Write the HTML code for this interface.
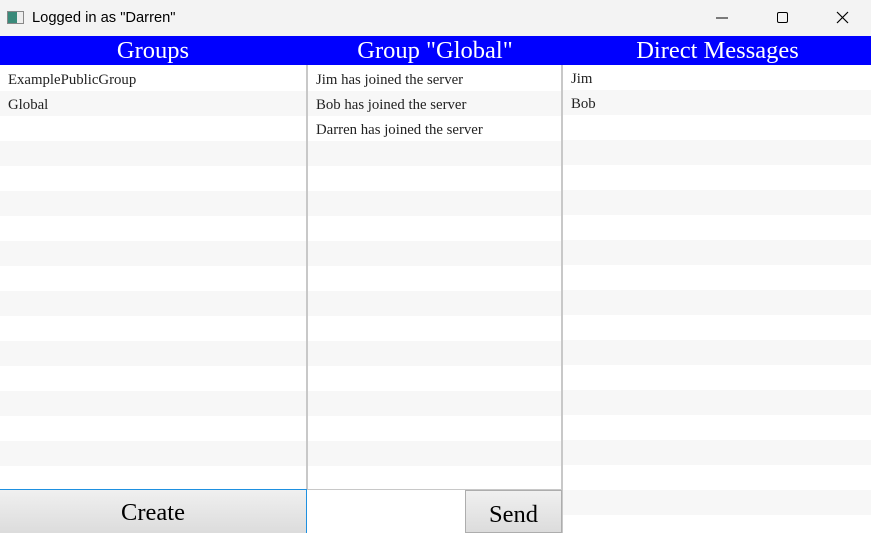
<!DOCTYPE html>
<html><head><meta charset="utf-8"><style>
*{margin:0;padding:0;box-sizing:border-box}
body{width:871px;height:533px;overflow:hidden;background:#fff;position:relative;font-family:"Liberation Serif",serif}
.title{position:absolute;left:0;top:0;width:871px;height:36px;background:#f3f3f3;font-family:"Liberation Sans",sans-serif;font-size:14.7px;color:#000}
.title .t{position:absolute;left:32px;top:10px}
.icon{position:absolute;left:7px;top:11px;width:17px;height:13px;border:1px solid #888;background:linear-gradient(90deg,#3a8a7a 0 60%,#eee 60%)}
.hdr{position:absolute;top:36px;height:29px;background:#0000ff;color:#fff;font-size:24.5px;text-align:center;line-height:29px}
.list{position:absolute;overflow:hidden;background:repeating-linear-gradient(#fff 0 25px,#f7f7f7 25px 50px)}
.row{height:25px;line-height:28px;font-size:14.8px;color:#222;padding-left:8px}
.vb{position:absolute;width:2px;background:#c8c8c8}
.btn{position:absolute;background:linear-gradient(#f0f0f0,#dcdcdc);border:1px solid #adadad;font-size:24.5px;text-align:center;color:#000}
</style></head><body>
<div class="title"><div class="icon"></div><span class="t">Logged in as "Darren"</span>
<svg style="position:absolute;left:716px;top:11px" width="140" height="14"><line x1="0" y1="7" x2="12" y2="7" stroke="#000" stroke-width="1"/><rect x="61.5" y="1.5" width="10" height="10" rx="1.5" fill="none" stroke="#000"/><path d="M121 1L132 12M132 1L121 12" stroke="#000" stroke-width="1.2"/></svg></div>
<div class="hdr" style="left:0;width:306px">Groups</div>
<div class="hdr" style="left:306px;width:258px">Group "Global"</div>
<div class="hdr" style="left:564px;width:307px;">Direct Messages</div>
<div class="list" style="left:0;top:66px;width:306px;height:423px"><div class="row">ExamplePublicGroup</div><div class="row">Global</div></div>
<div class="vb" style="left:306px;top:65px;height:425px"></div>
<div class="list" style="left:308px;top:66px;width:253px;height:424px"><div class="row">Jim has joined the server</div><div class="row">Bob has joined the server</div><div class="row">Darren has joined the server</div></div>
<div class="vb" style="left:561px;top:65px;height:468px"></div>
<div style="position:absolute;left:306px;top:489px;width:256px;height:1px;background:#c8c8c8"></div>
<div class="list" style="left:563px;top:65px;width:308px;height:468px"><div class="row">Jim</div><div class="row">Bob</div></div>
<div class="btn" style="left:0;top:489px;width:307px;height:44px;border-color:#1e90e0;border-bottom:none;border-left:none;line-height:46px">Create</div>
<div style="position:absolute;left:308px;top:490px;width:158px;height:43px;background:#fff"></div>
<div class="btn" style="left:465px;top:490px;width:97px;height:43px;line-height:47px">Send</div>
</body></html>
